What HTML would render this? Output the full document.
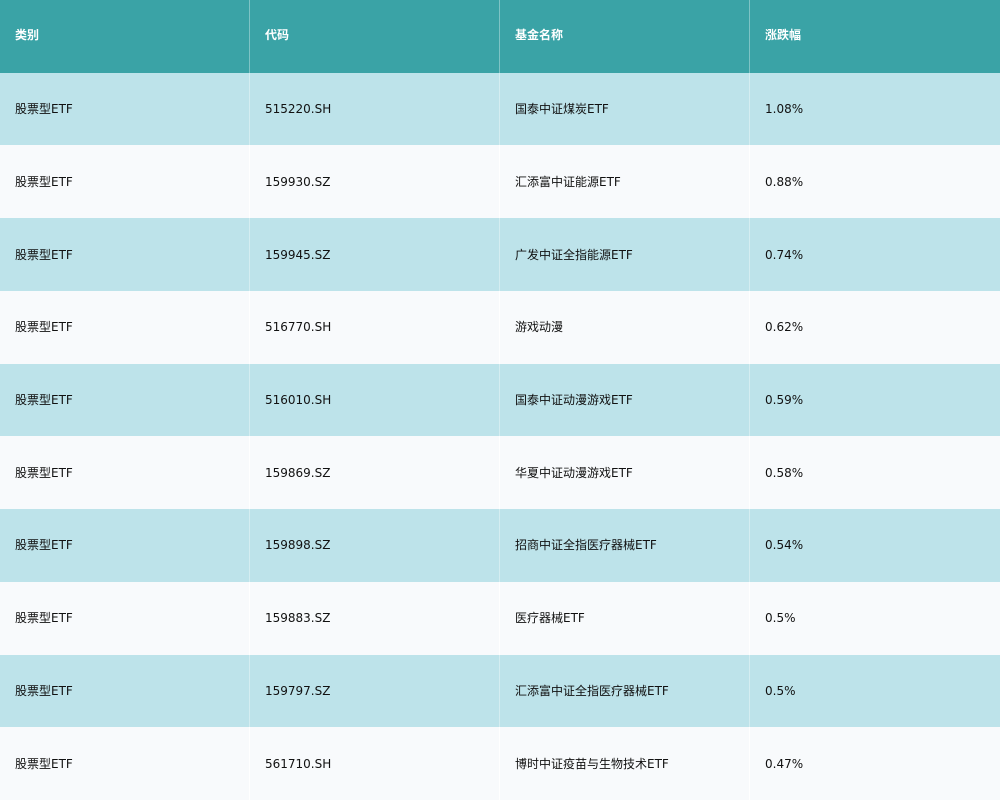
<!DOCTYPE html>
<html><head><meta charset="utf-8"><style>
html,body{margin:0;padding:0;width:1000px;height:800px;overflow:hidden;background:#f8fafc}
.g{display:grid;grid-template-columns:250px 250px 250px 250px;grid-template-rows:repeat(11,1fr);height:800px;width:1000px}
.g div{display:flex;align-items:center;padding-left:15px;font-family:"DejaVu Sans","Noto Sans CJK SC",sans-serif;font-size:12px;line-height:14px;color:#111;border-right:1px solid rgba(255,255,255,0.35);box-sizing:border-box}
.g div:nth-child(4n){border-right:none}
.g div.h{background:#3aa3a6;color:#fff;font-weight:bold;padding-bottom:2px}
.g div.a{background:#bde3ea}
.g div.b{background:#f8fafc;border-right-color:#fff}
</style></head><body><div class="g">
<div class="h">类别</div><div class="h">代码</div><div class="h">基金名称</div><div class="h">涨跌幅</div>
<div class="a">股票型ETF</div><div class="a">515220.SH</div><div class="a">国泰中证煤炭ETF</div><div class="a">1.08%</div>
<div class="b">股票型ETF</div><div class="b">159930.SZ</div><div class="b">汇添富中证能源ETF</div><div class="b">0.88%</div>
<div class="a">股票型ETF</div><div class="a">159945.SZ</div><div class="a">广发中证全指能源ETF</div><div class="a">0.74%</div>
<div class="b">股票型ETF</div><div class="b">516770.SH</div><div class="b">游戏动漫</div><div class="b">0.62%</div>
<div class="a">股票型ETF</div><div class="a">516010.SH</div><div class="a">国泰中证动漫游戏ETF</div><div class="a">0.59%</div>
<div class="b">股票型ETF</div><div class="b">159869.SZ</div><div class="b">华夏中证动漫游戏ETF</div><div class="b">0.58%</div>
<div class="a">股票型ETF</div><div class="a">159898.SZ</div><div class="a">招商中证全指医疗器械ETF</div><div class="a">0.54%</div>
<div class="b">股票型ETF</div><div class="b">159883.SZ</div><div class="b">医疗器械ETF</div><div class="b">0.5%</div>
<div class="a">股票型ETF</div><div class="a">159797.SZ</div><div class="a">汇添富中证全指医疗器械ETF</div><div class="a">0.5%</div>
<div class="b">股票型ETF</div><div class="b">561710.SH</div><div class="b">博时中证疫苗与生物技术ETF</div><div class="b">0.47%</div>
</div></body></html>
